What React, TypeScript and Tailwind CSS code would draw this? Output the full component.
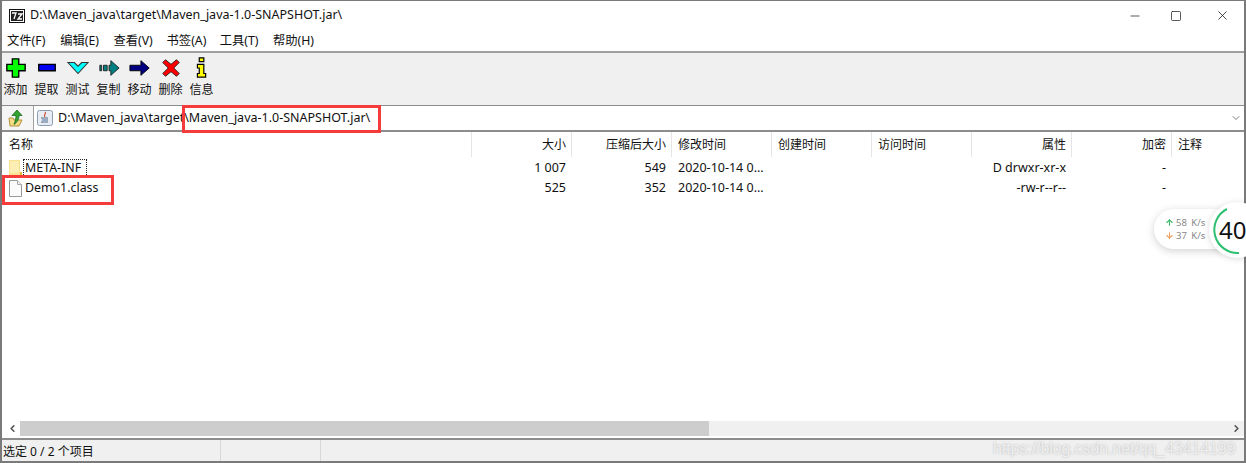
import { ArrowDown, ArrowUp, ChevronDown, ChevronLeft, ChevronRight, Minus, Square, X } from "lucide-react";

const font = "font-['Noto_Sans','Noto_Sans_CJK_SC',sans-serif]";

const menus = ["文件(F)", "编辑(E)", "查看(V)", "书签(A)", "工具(T)", "帮助(H)"];

// toolbar icons, drawn on a 24x24 box
const tools = [
  {
    label: "添加",
    icon: <path d="M8 2h7v6h7v7h-7v7H8v-7H2V8h6z" fill="#00ff00" stroke="#000" strokeWidth="1.5" />,
  },
  {
    label: "提取",
    icon: <path d="M3 8h18v7H3z" fill="#0000f0" stroke="#000" strokeWidth="1.5" />,
  },
  {
    label: "测试",
    icon: <path d="M1 6h7l4 4 4-4h7L12 18z" fill="#00ffff" stroke="#333" strokeWidth="1.2" />,
  },
  {
    label: "复制",
    icon: (
      <g fill="#008080" stroke="#222" strokeWidth="1">
        <path d="M2 9h2v6H2z" />
        <path d="M6 9h4v6H6z" />
        <path d="M12 9h2V4l9 8-9 8v-5h-2z" />
      </g>
    ),
  },
  {
    label: "移动",
    icon: <path d="M1 9h12V4l9 8-9 8v-5H1z" fill="#000080" stroke="#000" strokeWidth="1" />,
  },
  {
    label: "删除",
    icon: (
      <path
        d="M3 6l3-3 6 5 6-5 3 3-6 6 6 6-3 3-6-5-6 5-3-3 6-6z"
        fill="#ff0000"
        stroke="#222"
        strokeWidth="1"
      />
    ),
  },
  {
    label: "信息",
    icon: (
      <g fill="#ffff00" stroke="#000" strokeWidth="1.3">
        <path d="M9 1h5v4H9z" />
        <path d="M7 8h7v10h2v4H7v-4h2v-6H7z" />
      </g>
    ),
  },
];

const columns = [
  { name: "大小", width: "w-[100px]", right: true },
  { name: "压缩后大小", width: "w-[100px]", right: true },
  { name: "修改时间", width: "w-[100px]", right: false },
  { name: "创建时间", width: "w-[100px]", right: false },
  { name: "访问时间", width: "w-[100px]", right: false },
  { name: "属性", width: "w-[100px]", right: true },
  { name: "加密", width: "w-[100px]", right: true },
  { name: "注释", width: "flex-1", right: false },
];

const rows = [
  {
    name: "META-INF",
    folder: true,
    cells: ["1 007", "549", "2020-10-14 0...", "", "", "D drwxr-xr-x", "-", ""],
  },
  {
    name: "Demo1.class",
    folder: false,
    cells: ["525", "352", "2020-10-14 0...", "", "", "-rw-r--r--", "-", ""],
  },
];

const FolderIcon = () => (
  <svg width="14" height="17" viewBox="0 0 14 17" className="shrink-0">
    <path d="M0 0h11v16H0z" fill="#fbe08e" />
    <path d="M1 1h9v12H1z" fill="#fdeeb5" />
    <path d="M11 12h2v5h-2z" fill="#e8b93f" />
  </svg>
);

const FileIcon = () => (
  <svg width="14" height="17" viewBox="0 0 14 17" className="shrink-0">
    <path d="M.5.5h8l4 4v12H.5z" fill="#fbfbfb" stroke="#999" />
    <path d="M8.5.5v4h4" fill="#eee" stroke="#aaa" />
  </svg>
);

const App = () => {
  return (
    <div className={`${font} relative w-[1246px] h-[463px] overflow-hidden bg-white text-[12px] leading-none text-[#111]`}>
      <div className="w-full h-full border-2 border-t border-[#7a7a7a] flex flex-col">
        {/* title bar */}
        <div className="h-[29px] shrink-0 flex items-center pl-[7px]">
          <svg width="16" height="14" viewBox="0 0 16 14" className="shrink-0">
            <rect x="0.5" y="0.5" width="15" height="13" fill="#fff" stroke="#111" />
            <rect x="2" y="2" width="12" height="10" fill="#222" />
            <path d="M3 4h4L5 10M9 5h4l-4 5h4" fill="none" stroke="#fff" strokeWidth="1.3" />
          </svg>
          <span className="ml-[5px] text-[12.5px]">D:\Maven_java\target\Maven_java-1.0-SNAPSHOT.jar\</span>
          <div className="ml-auto flex items-center">
            <Minus className="w-[14px] h-[14px] mr-[28px]" strokeWidth={1.2} />
            <Square className="w-[12px] h-[12px] mr-[33px]" strokeWidth={1.4} absoluteStrokeWidth />
            <X className="w-[15px] h-[15px] mr-[14px]" strokeWidth={1.2} />
          </div>
        </div>

        {/* menu */}
        <div className="h-[21px] shrink-0 flex items-center pl-[5px] pt-[2px] text-[12.3px]">
          {menus.map((m) => (
            <span key={m} className="w-[53.2px] shrink-0">{m}</span>
          ))}
        </div>

        {/* toolbar */}
        <div className="h-[54px] shrink-0 border-t-2 border-[#a0a0a0] bg-[#f0f0f0] flex items-start pt-[4px]">
          {tools.map((t) => (
            <div key={t.label} className="w-[31px] flex flex-col items-center gap-[5px] -translate-x-[2px]">
              <svg width="22" height="22" viewBox="0 0 24 24">
                {t.icon}
              </svg>
              <span className="text-[12px]">{t.label}</span>
            </div>
          ))}
        </div>

        {/* address bar */}
        <div className="h-[27px] shrink-0 border-t border-[#8c8c8c] border-b-2 border-b-[#8c8c8c] flex items-center bg-[#f5f5f5]">
          <div className="w-[31px] flex justify-center pr-[4px]">
            <svg width="16" height="17" viewBox="0 0 16 17">
              <path d="M1 8h4l1 2h8l-3 6H2z" fill="#f7dc85" stroke="#b3903c" />
              <path d="M9 0l5 5.500h-3c0 4-2 7-5 9 1-3 2-6 2-9H4z" fill="#33a532" stroke="#1d6b1d" strokeWidth="0.8" />
            </svg>
          </div>
          <div className="flex-1 h-full bg-white border-l border-[#a0a0a0] flex items-center pl-[3px]">
            <svg width="16" height="16" viewBox="0 0 16 16" className="shrink-0">
              <rect x="0.5" y="0.5" width="15" height="15" rx="2" fill="#e9edf3" stroke="#8b9db3" />
              <path d="M4 8h7M5 10h6M4 12h7" fill="none" stroke="#4f6d8e" />
              <path d="M8 2c2 1.500-2 2.500 0 5" fill="none" stroke="#d1492e" strokeWidth="1.2" />
            </svg>
            <span className="ml-[5px] text-[12.5px]">D:\Maven_java\target\Maven_java-1.0-SNAPSHOT.jar\</span>
            <ChevronDown className="ml-auto mr-[2px] w-[12px] h-[12px] text-[#555]" strokeWidth={1.5} />
          </div>
        </div>

        {/* file list */}
        <div className="flex-1 min-h-0 flex flex-col">
          <div className="h-[26px] shrink-0 flex items-center text-[12px] pb-[1px]">
            <div className="w-[470px] h-full pl-[7px] flex items-center border-r border-[#e5e5e5]">名称</div>
            {columns.map((c) => (
              <div
                key={c.name}
                className={`${c.width} h-full flex items-center ${c.right ? "justify-end pr-[5px]" : "pl-[6px]"} ${c.width === "flex-1" ? "" : "border-r border-[#e5e5e5]"}`}
              >
                {c.name}
              </div>
            ))}
          </div>
          {rows.map((r) => (
            <div key={r.name} className="h-[20px] shrink-0 flex items-center text-[12.5px]">
              <div className="w-[470px] flex items-center pl-[7px] gap-[1px] text-[12.4px]">
                {r.folder ? <FolderIcon /> : <FileIcon />}
                <span className={`pl-[1px] pr-[5px] py-[2px] ${r.folder ? "outline-1 outline-dotted outline-[#222]" : ""}`}>{r.name}</span>
              </div>
              {columns.map((c, i) => (
                <div
                  key={c.name}
                  className={`${c.width} flex items-center ${c.right ? "justify-end pr-[6px]" : "pl-[6px]"} whitespace-nowrap`}
                >
                  {r.cells[i]}
                </div>
              ))}
            </div>
          ))}
          <div className="flex-1" />

          {/* horizontal scrollbar */}
          <div className="h-[15px] shrink-0 mb-[2px] bg-[#f0f0f0] flex items-center">
            <div className="w-[18px] flex justify-center pl-[2px] bg-white h-full items-center">
              <ChevronLeft className="w-[11px] h-[11px] text-[#555]" strokeWidth={3.5} />
            </div>
            <div className="w-[689px] h-full bg-[#cdcdcd]" />
            <ChevronRight className="ml-auto mr-[2px] w-[11px] h-[11px] text-[#555]" strokeWidth={3.5} />
          </div>
        </div>

        {/* status bar */}
        <div className="h-[23px] shrink-0 border-t-2 border-[#8c8c8c] bg-[#f0f0f0] flex items-center text-[12px]">
          <div className="w-[219px] h-full flex items-center pl-[1px] pt-[2px] border-r border-[#d8d8d8]">选定 0 / 2 个项目</div>
          <div className="w-[100px] h-full border-r border-[#d8d8d8]" />
        </div>
      </div>

      {/* red annotation boxes */}
      <div className="absolute left-[182px] top-[105px] w-[199px] h-[28px] border-[3px] border-[#f63b3b]" />
      <div className="absolute left-[2px] top-[175px] w-[112px] h-[30px] border-[3px] border-[#f63b3b]" />

      {/* network speed widget */}
      <div className="absolute left-[1154px] top-[209px] w-[70px] h-[40px] rounded-l-[20px] bg-white shadow-[0_2px_8px_rgba(0,0,0,0.18)] flex flex-col justify-center gap-[4px] pl-[11px] text-[9.5px] text-[#888] [word-spacing:2px]">
        <span className="flex items-center gap-[2px]"><ArrowUp className="w-[9px] h-[9px] text-[#3dba6a]" strokeWidth={3} />58 K/s</span>
        <span className="flex items-center gap-[2px]"><ArrowDown className="w-[9px] h-[9px] text-[#f0a060]" strokeWidth={3} />37 K/s</span>
      </div>
      <div className="absolute left-[1209px] top-[202px] w-[56px] h-[56px] rounded-full bg-white shadow-[0_1px_6px_rgba(0,0,0,0.15)] flex items-center pl-[10px] text-[24px] text-[#111]">
        <svg width="56" height="56" viewBox="0 0 56 56" className="absolute left-0 top-0">
          <path d="M18 7A23.300 23.300 0 0 0 30 51" fill="none" stroke="#2fbf71" strokeWidth="2" />
        </svg>
        <span className="relative">40</span>
      </div>

      {/* csdn watermark */}
      <span className="absolute left-[993px] top-[441px] text-[15.8px] font-['Liberation_Sans',sans-serif] text-white/70 [text-shadow:0_0_2px_rgba(150,150,150,0.7)]">https://blog.csdn.net/qq_43414199</span>
    </div>
  );
};

export default App;
